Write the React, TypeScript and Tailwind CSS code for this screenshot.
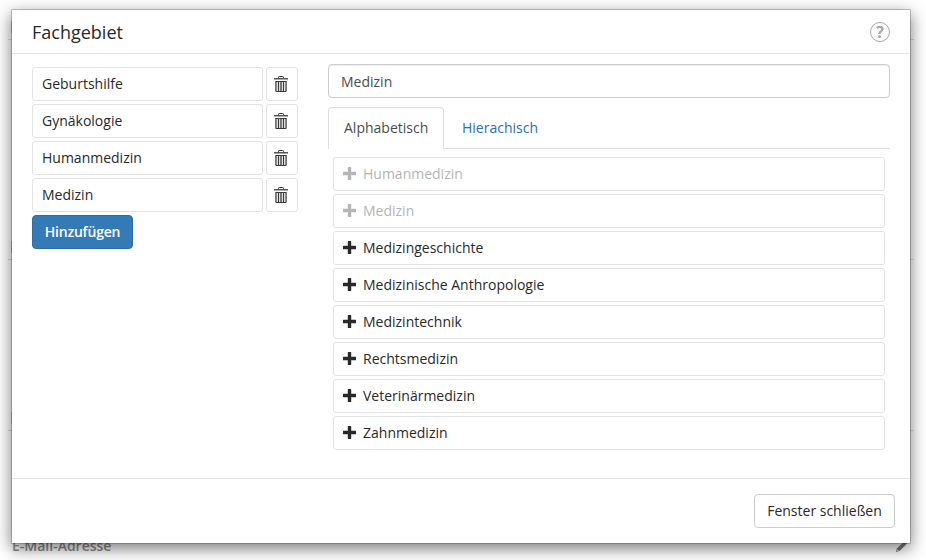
import React from 'react';

const selected = ['Geburtshilfe', 'Gynäkologie', 'Humanmedizin', 'Medizin'];

const results = [
  { name: 'Humanmedizin', disabled: true },
  { name: 'Medizin', disabled: true },
  { name: 'Medizingeschichte', disabled: false },
  { name: 'Medizinische Anthropologie', disabled: false },
  { name: 'Medizintechnik', disabled: false },
  { name: 'Rechtsmedizin', disabled: false },
  { name: 'Veterinärmedizin', disabled: false },
  { name: 'Zahnmedizin', disabled: false },
];

function TrashIcon() {
  return (
    <svg className="block h-[16px] w-[14px]" viewBox="0 0 14 16" fill="none">
      <path d="M4.500 2.500V1.300Q4.500 .5 5.300 .5H8.700Q9.500 .5 9.500 1.300V2.500" stroke="#333" />
      <path d="M0 2H14V3H0Z" fill="#555" />
      <path d="M0 3H14V4H0Z" fill="#aaa" />
      <path d="M1.300 5H12.700V15Q12.700 16 11.700 16H2.300Q1.300 16 1.300 15Z" fill="#3a3a3a" />
      <path d="M2.500 6H4V15H2.500ZM5 6H6V15H5ZM8 6H9V15H8ZM10 6H11.500V15H10Z" fill="#dedede" />
      <path d="M6 6H8V15H6Z" fill="#777" />
    </svg>
  );
}

function PlusIcon() {
  return (
    <svg className="mb-[1px] block h-[13px] w-[13px]" viewBox="0 0 13 13" fill="currentColor">
      <path d="M5.300 0H7.700Q8.200 0 8.200 .5V4.800H12.500Q13 4.800 13 5.300V7.700Q13 8.200 12.500 8.200H8.200V12.500Q8.200 13 7.700 13H5.300Q4.800 13 4.800 12.500V8.200H.5Q0 8.200 0 7.700V5.300Q0 4.800 .5 4.800H4.800V.5Q4.800 0 5.300 0Z" />
    </svg>
  );
}

function PageBehind() {
  return (
    <div className="absolute inset-0">
      <div className="absolute top-[39px] left-[8px] h-px w-[906px] bg-[#dddddd]" />
      <div className="absolute top-[259px] left-[8px] h-px w-[906px] bg-[#dddddd]" />
      <div className="absolute top-[430px] left-[8px] h-px w-[906px] bg-[#dddddd]" />
      <div className="absolute top-[21px] left-[11px] h-[12px] w-px bg-[#e0cdae]" />
      <div className="absolute top-[241px] left-[11px] h-[12px] w-px bg-[#e0cdae]" />
      <div className="absolute top-[412px] left-[11px] h-[12px] w-px bg-[#e0cdae]" />
      <div className="absolute top-[536px] left-[12px] text-[14px] leading-[20px] font-semibold text-[#8c8c8c]">E-Mail-Adresse</div>
      <svg className="absolute top-[539px] left-[895px] h-[14px] w-[14px]" viewBox="0 0 14 14" fill="#777">
        <path d="M1 13L1.800 9.500L9.500 2L12 4.500L4.500 12Z" />
        <path d="M1.800 12.200L2.300 10.200L3.900 11.700Z" fill="#ddd" />
      </svg>
    </div>
  );
}

export default function App() {
  return (
    <div className="relative h-[560px] w-[926px] overflow-hidden bg-white font-['Open_Sans','Noto_Sans',sans-serif] text-[14px] leading-[20px] text-[#292929]">
      <PageBehind />
      <div className="absolute top-[9px] left-[11px] flex h-[535px] w-[900px] flex-col border border-black/20 bg-white bg-clip-padding shadow-[0_5px_15px_rgba(0,0,0,0.5)]">
        <header className="flex h-[44px] shrink-0 items-center justify-between border-b border-[#e5e5e5] pr-[20px] pl-[20px]">
          <h4 className="pt-[2px] text-[18px] leading-[25px]">Fachgebiet</h4>
          <div className="flex h-[20px] w-[20px] items-center justify-center rounded-full border border-[#a5a5a5] text-[16px] leading-none font-bold text-[#a5a5a5]">?</div>
        </header>

        <main className="flex flex-1 items-start pr-[20px] pl-[20px]">
          <div className="mt-[13px] flex w-[266px] flex-col items-start gap-[3px]">
            {selected.map((name) => (
              <div key={name} className="flex w-full gap-[3px]">
                <div className="h-[34px] w-[231px] rounded-[3px] border border-[#e3e3e3] px-[9px] py-[6px]">{name}</div>
                <button className="flex h-[34px] w-[32px] items-start justify-center rounded-[3px] border border-[#e3e3e3] pt-[8px] pr-[2px]">
                  <TrashIcon />
                </button>
              </div>
            ))}
            <button className="h-[34px] w-[101px] rounded-[4px] border border-[#2e6da4] bg-[#337ab7] text-center font-semibold tracking-[-0.2px] text-white">Hinzufügen</button>
          </div>

          <div className="mt-[10px] ml-[30px] flex flex-1 flex-col">
            <div className="h-[34px] rounded-[4px] border border-[#cccccc] px-[12px] py-[7px] text-[#4c4c4c] shadow-[inset_0_1px_1px_rgba(0,0,0,0.075)]">Medizin</div>
            <nav className="mt-[9px] flex h-[42px] border-b border-[#dddddd]">
              <div className="h-[42px] w-[116px] rounded-t-[4px] border border-b-0 border-[#dddddd] bg-white px-[15px] py-[10px] text-[#4c4c4c]">Alphabetisch</div>
              <div className="px-[18px] py-[11px] text-[#2b70ad]">Hierachisch</div>
            </nav>
            <div className="mt-[8px] flex flex-col gap-[3px] px-[5px]">
              {results.map((item) => (
                <div
                  key={item.name}
                  className={
                    item.disabled
                      ? 'flex h-[34px] items-center gap-[7px] rounded-[3px] border border-[#e3e3e3] px-[9px] text-[#b5b5b5]'
                      : 'flex h-[34px] items-center gap-[7px] rounded-[3px] border border-[#e3e3e3] px-[9px]'
                  }
                >
                  <PlusIcon />
                  <span>{item.name}</span>
                </div>
              ))}
            </div>
          </div>
        </main>

        <footer className="flex h-[65px] shrink-0 items-start justify-end border-t border-[#e5e5e5] pt-[15px] pr-[15px]">
          <button className="h-[34px] w-[141px] rounded-[4px] border border-[#cccccc] bg-white text-center">Fenster schließen</button>
        </footer>
      </div>
    </div>
  );
}
